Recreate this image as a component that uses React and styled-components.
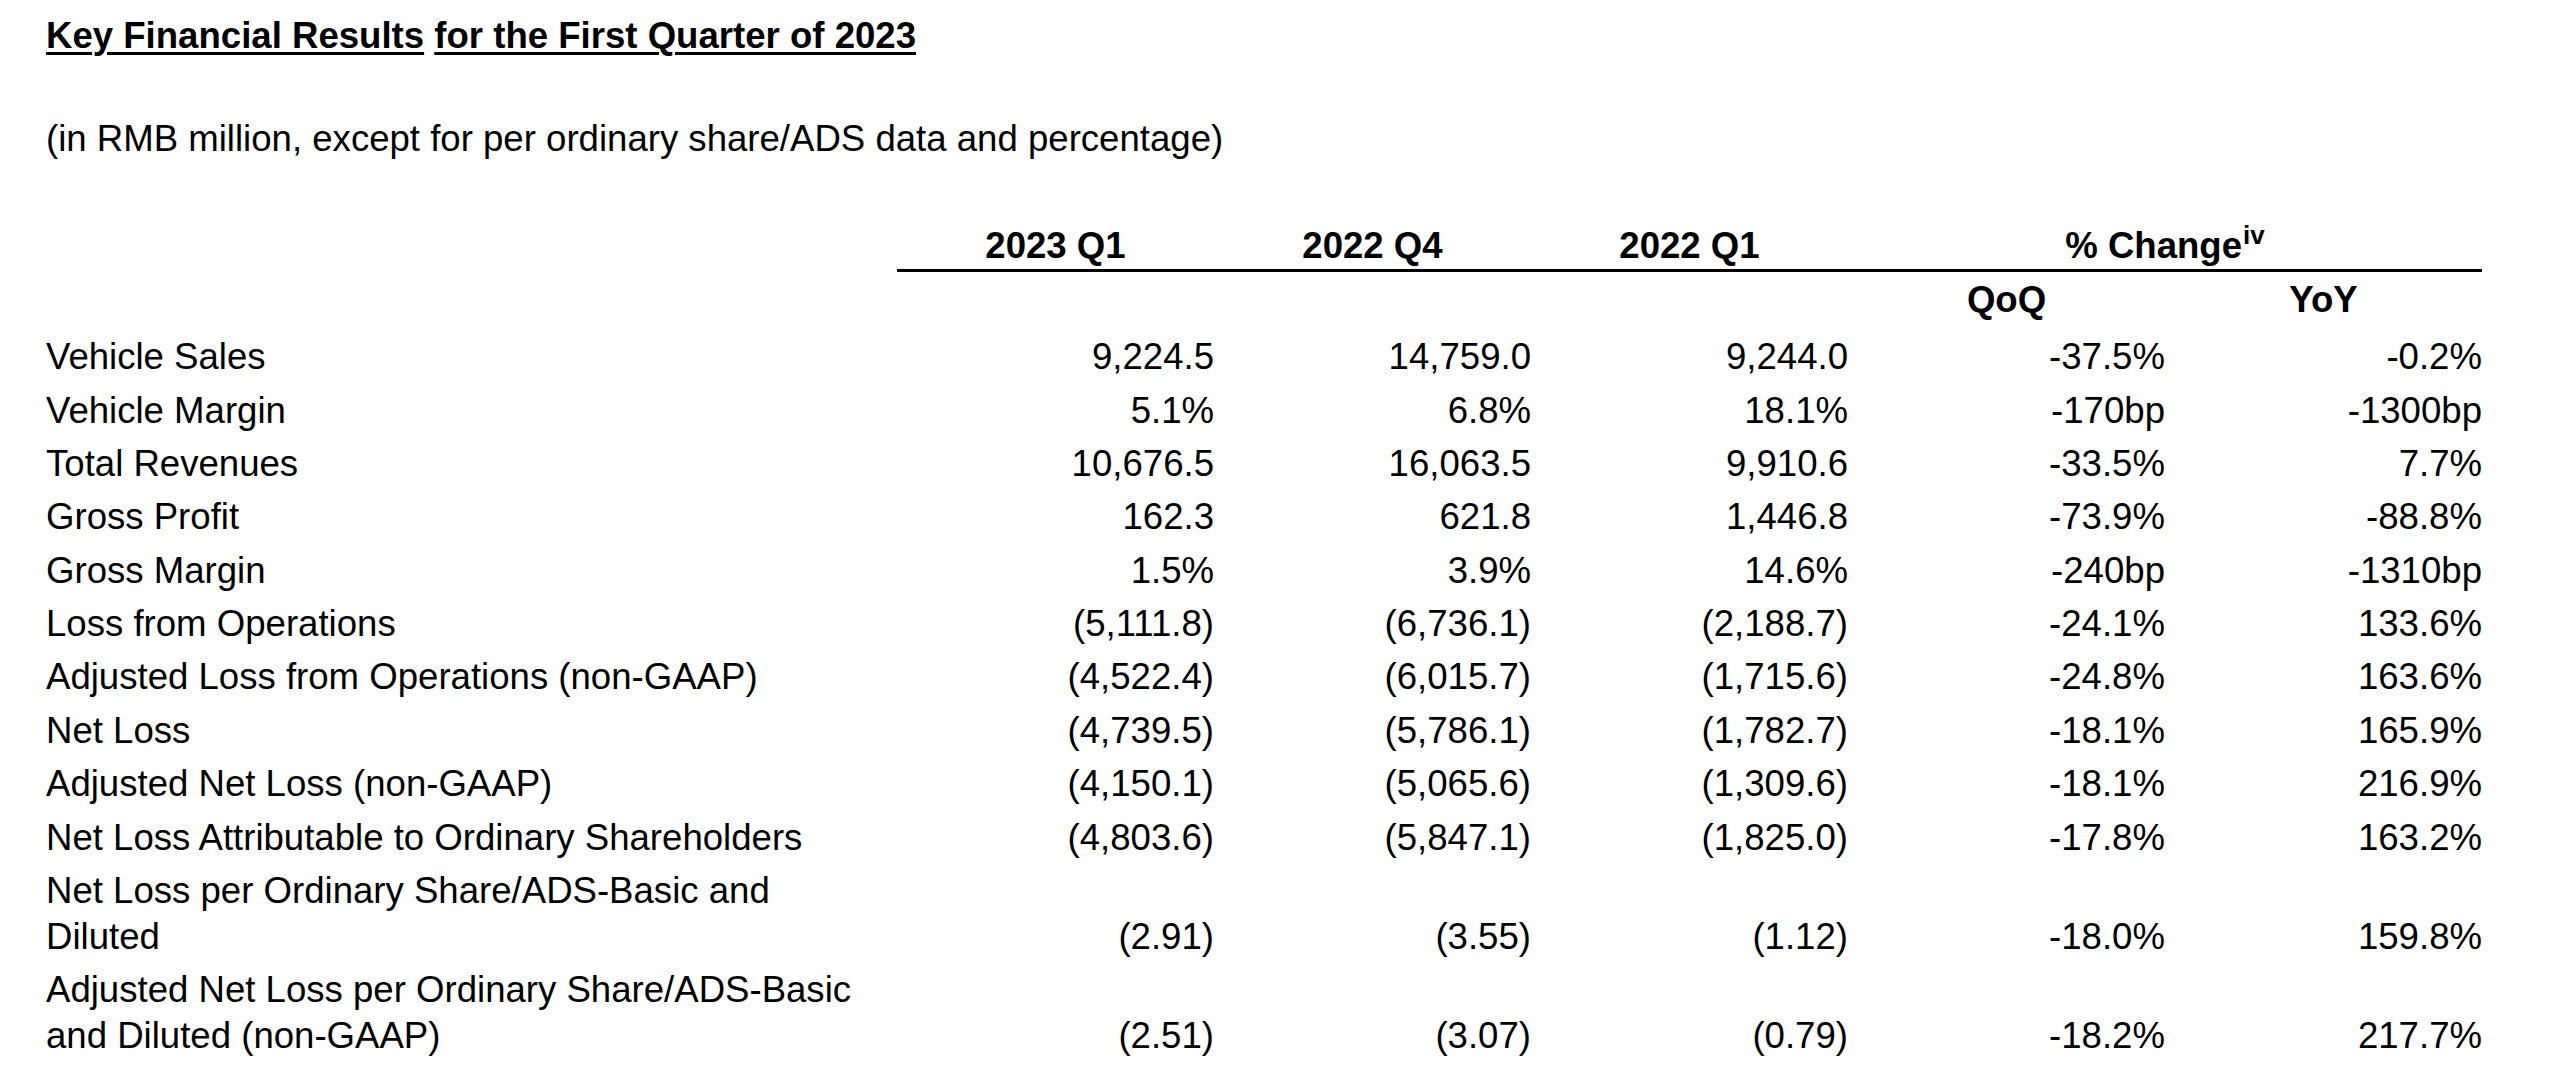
import React from "react";
import styled, { createGlobalStyle } from "styled-components";

const GlobalStyle = createGlobalStyle`
  html, body {
    margin: 0;
    padding: 0;
    background: #ffffff;
  }
  body {
    font-family: "Liberation Sans", Arial, Helvetica, sans-serif;
    color: #000000;
  }
`;

const COLS = "851px repeat(5, 317px)";

const Page = styled.main`
  padding: 13px 0 0 46px;
  font-size: 36.6px;
  line-height: 46px;
`;

const Title = styled.h1`
  margin: 0;
  font-size: 36.6px;
  line-height: 46px;
  font-weight: 700;
`;

const Underlined = styled.span`
  text-decoration: underline;
  text-decoration-thickness: 3px;
  text-underline-offset: 4px;
`;

const Subtitle = styled.p`
  margin: 57px 0 0;
  font-weight: 400;
`;

const Table = styled.section`
  margin-top: 61px;
  display: flex;
  flex-direction: column;
`;

const Row = styled.div`
  display: grid;
  grid-template-columns: ${COLS};
  align-items: end;
`;

const HeaderRow = styled(Row)``;

const HeadCell = styled.div`
  font-weight: 700;
  text-align: center;
  grid-column: ${(p) => p.$col} / span ${(p) => p.$span || 1};
  border-bottom: ${(p) => (p.$rule ? "3px solid #000" : "none")};
  height: 46px;
`;

const SubHeaderRow = styled(Row)`
  padding: 5px 0 7.5px;
`;

const Sup = styled.sup`
  font-size: 26px;
  font-weight: 700;
  line-height: 0;
  vertical-align: 14px;
  margin-left: 1px;
`;

const DataRow = styled(Row)`
  padding: 3.7px 0;
`;

const Label = styled.div`
  display: flex;
  flex-direction: column;
`;

const LabelLine = styled.span`
  white-space: nowrap;
`;

const Value = styled.div`
  text-align: right;
  white-space: nowrap;
`;

const rows = [
  { label: ["Vehicle Sales"], values: ["9,224.5", "14,759.0", "9,244.0", "-37.5%", "-0.2%"] },
  { label: ["Vehicle Margin"], values: ["5.1%", "6.8%", "18.1%", "-170bp", "-1300bp"] },
  { label: ["Total Revenues"], values: ["10,676.5", "16,063.5", "9,910.6", "-33.5%", "7.7%"] },
  { label: ["Gross Profit"], values: ["162.3", "621.8", "1,446.8", "-73.9%", "-88.8%"] },
  { label: ["Gross Margin"], values: ["1.5%", "3.9%", "14.6%", "-240bp", "-1310bp"] },
  { label: ["Loss from Operations"], values: ["(5,111.8)", "(6,736.1)", "(2,188.7)", "-24.1%", "133.6%"] },
  { label: ["Adjusted Loss from Operations (non-GAAP)"], values: ["(4,522.4)", "(6,015.7)", "(1,715.6)", "-24.8%", "163.6%"] },
  { label: ["Net Loss"], values: ["(4,739.5)", "(5,786.1)", "(1,782.7)", "-18.1%", "165.9%"] },
  { label: ["Adjusted Net Loss (non-GAAP)"], values: ["(4,150.1)", "(5,065.6)", "(1,309.6)", "-18.1%", "216.9%"] },
  { label: ["Net Loss Attributable to Ordinary Shareholders"], values: ["(4,803.6)", "(5,847.1)", "(1,825.0)", "-17.8%", "163.2%"] },
  { label: ["Net Loss per Ordinary Share/ADS-Basic and", "Diluted"], values: ["(2.91)", "(3.55)", "(1.12)", "-18.0%", "159.8%"] },
  { label: ["Adjusted Net Loss per Ordinary Share/ADS-Basic", "and Diluted (non-GAAP)"], values: ["(2.51)", "(3.07)", "(0.79)", "-18.2%", "217.7%"] },
];

export default function App() {
  return (
    <>
      <GlobalStyle />
      <Page>
        <Title>
          <Underlined>Key Financial Results</Underlined> <Underlined>for the First Quarter of 2023</Underlined>
        </Title>
        <Subtitle>(in RMB million, except for per ordinary share/ADS data and percentage)</Subtitle>
        <Table>
          <HeaderRow>
            <HeadCell $col={2} $rule>2023 Q1</HeadCell>
            <HeadCell $col={3} $rule>2022 Q4</HeadCell>
            <HeadCell $col={4} $rule>2022 Q1</HeadCell>
            <HeadCell $col={5} $span={2} $rule>
              % Change<Sup>iv</Sup>
            </HeadCell>
          </HeaderRow>
          <SubHeaderRow>
            <HeadCell $col={5}>QoQ</HeadCell>
            <HeadCell $col={6}>YoY</HeadCell>
          </SubHeaderRow>
          {rows.map((r) => (
            <DataRow key={r.label.join(" ")}>
              <Label>
                {r.label.map((l) => (
                  <LabelLine key={l}>{l}</LabelLine>
                ))}
              </Label>
              {r.values.map((v, i) => (
                <Value key={i}>{v}</Value>
              ))}
            </DataRow>
          ))}
        </Table>
      </Page>
    </>
  );
}
